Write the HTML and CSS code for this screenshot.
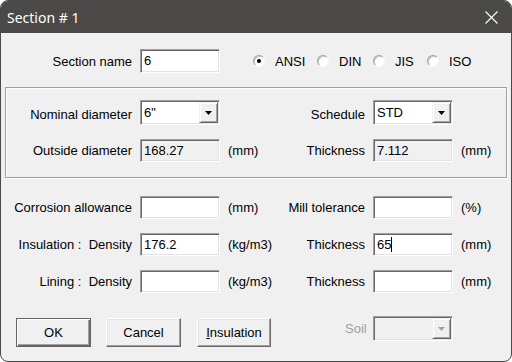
FILE: index.html
```html
<!DOCTYPE html>
<html lang="en">
<head>
    <meta charset="UTF-8">
    <title>Section # 1</title>
    <link rel="stylesheet" href="styles.css">
</head>
<body>
    <div class="window">
        <div class="titlebar">
            <span class="title">Section # 1</span>
            <svg class="close" width="13" height="13" viewBox="0 0 13 13">
                <path d="M0.5 0.5 L12.5 12.5 M12.5 0.5 L0.5 12.5" stroke="#ffffff" stroke-width="1.1" fill="none"/>
            </svg>
        </div>

        <div class="client">
            <div class="form-grid name-row">
                <span class="lbl">Section name</span>
                <div class="edit">6</div>
                <div class="radios">
                    <span class="radio r-ansi"><span class="dot checked"></span>ANSI</span>
                    <span class="radio r-din"><span class="dot"></span>DIN</span>
                    <span class="radio r-jis"><span class="dot"></span>JIS</span>
                    <span class="radio"><span class="dot"></span>ISO</span>
                </div>
            </div>

            <div class="group">
                <div class="form-grid pipe-grid">
                    <span class="lbl combo-lbl">Nominal diameter</span>
                    <div class="edit combo"><span class="combo-val">6"</span><span class="combo-btn"><svg width="7" height="4" viewBox="0 0 7 4"><polygon points="0,0 7,0 3.5,4" fill="#000"/></svg></span></div>
                    <span></span>
                    <span class="lbl combo-lbl">Schedule</span>
                    <div class="edit combo"><span class="combo-val">STD</span><span class="combo-btn"><svg width="7" height="4" viewBox="0 0 7 4"><polygon points="0,0 7,0 3.5,4" fill="#000"/></svg></span></div>
                    <span></span>

                    <span class="lbl">Outside diameter</span>
                    <div class="edit readonly">168.27</div>
                    <span class="unit">(mm)</span>
                    <span class="lbl">Thickness</span>
                    <div class="edit readonly">7.112</div>
                    <span class="unit">(mm)</span>
                </div>
            </div>

            <div class="form-grid lower-grid">
                <span class="lbl">Corrosion allowance</span>
                <div class="edit"></div>
                <span class="unit">(mm)</span>
                <span class="lbl">Mill tolerance</span>
                <div class="edit"></div>
                <span class="unit">(%)</span>

                <span class="lbl">Insulation :  Density</span>
                <div class="edit">176.2</div>
                <span class="unit">(kg/m3)</span>
                <span class="lbl">Thickness</span>
                <div class="edit">65<span class="caret"></span></div>
                <span class="unit">(mm)</span>

                <span class="lbl">Lining :  Density</span>
                <div class="edit"></div>
                <span class="unit">(kg/m3)</span>
                <span class="lbl">Thickness</span>
                <div class="edit"></div>
                <span class="unit">(mm)</span>
            </div>

            <div class="button-row">
                <button class="btn default">OK</button>
                <button class="btn">Cancel</button>
                <button class="btn btn-ins"><u>I</u>nsulation</button>
                <span class="soil-lbl">Soil</span>
                <div class="edit combo disabled"><span class="combo-val"></span><span class="combo-btn"><svg width="7" height="4" viewBox="0 0 7 4"><polygon points="0,0 7,0 3.5,4" fill="#a0a0a0"/></svg></span></div>
            </div>
        </div>
    </div>
</body>
</html>
```

FILE: styles.css
```css
body {
    margin: 0;
    background-color: #ffffff;
    font-family: "Liberation Sans", Arial, sans-serif;
    font-size: 13px;
    color: #000000;
}

.window {
    width: 512px;
    height: 362px;
    box-sizing: border-box;
    background-color: #f0f0f0;
    border: 1px solid #4b4947;
    border-radius: 8px;
    overflow: hidden;
}

.titlebar {
    height: 32px;
    background-color: #4b4947;
    display: flex;
    align-items: center;
    justify-content: space-between;
    padding: 0 13px 0 6px;
}

.title {
    color: #ffffff;
    font-family: "Noto Sans", "Open Sans", sans-serif;
    font-size: 14px;
}

.close {
    display: block;
}

.client {
    padding-top: 16px;
}

.form-grid {
    display: grid;
    grid-template-columns: 125px 80px 48px 81px 80px auto;
    column-gap: 8px;
    align-items: center;
}

.lbl {
    text-align: right;
    white-space: pre;
}

.combo-lbl {
    padding-top: 4px;
}

.unit {
    white-space: nowrap;
}

.name-row {
    margin: 0 6px;
    grid-template-rows: 24px;
}

.name-row .edit {
    height: 24px;
}

.radios {
    grid-column: 3 / -1;
    display: flex;
    align-items: center;
    padding-left: 25px;
}

.radio {
    display: flex;
    align-items: center;
}

.r-ansi {
    width: 64px;
}

.r-din {
    width: 56px;
}

.r-jis {
    width: 54px;
}

.dot {
    width: 12px;
    height: 12px;
    box-sizing: border-box;
    margin-right: 10px;
    border-radius: 50%;
    background-color: #ffffff;
    border: 1px solid;
    border-color: #a0a0a0 #f8f8f8 #f8f8f8 #a0a0a0;
    box-shadow: inset 1px 1px 0 #c8c8c8;
    display: flex;
    align-items: center;
    justify-content: center;
}

.dot.checked::after {
    content: "";
    width: 4px;
    height: 4px;
    border-radius: 50%;
    background-color: #000000;
}

.edit {
    box-sizing: border-box;
    height: 23px;
    background-color: #ffffff;
    border: 1px solid;
    border-color: #a0a0a0 #ffffff #ffffff #a0a0a0;
    box-shadow: inset 1px 1px 0 #696969, inset -1px -1px 0 #e3e3e3;
    padding: 0 3px;
    line-height: 21px;
    white-space: nowrap;
}

.edit.readonly {
    background-color: #f0f0f0;
}

.caret {
    display: inline-block;
    width: 1px;
    height: 15px;
    background-color: #000000;
    vertical-align: -3px;
}

.combo {
    height: 25px;
    display: flex;
    padding: 1px 1px 1px 3px;
    line-height: 21px;
}

.combo-val {
    flex: 1;
}

.combo-btn {
    width: 19px;
    box-sizing: border-box;
    background-color: #f0f0f0;
    border: 1px solid;
    border-color: #f0f0f0 #696969 #696969 #f0f0f0;
    box-shadow: inset 1px 1px 0 #ffffff, inset -1px -1px 0 #a0a0a0;
    display: flex;
    align-items: center;
    justify-content: center;
}

.combo.disabled {
    background-color: #f0f0f0;
}

.group {
    margin: 14px 4px 0 4px;
    padding: 12px 1px 15px 1px;
    border: 1px solid #a0a0a0;
    box-shadow: inset 1px 1px 0 #ffffff, 1px 1px 0 #ffffff;
}

.pipe-grid {
    grid-template-rows: 25px 23px;
    row-gap: 14px;
}

.lower-grid {
    margin: 18px 6px 0 6px;
    grid-template-rows: 23px 23px 23px;
    row-gap: 14px;
}

.button-row {
    display: flex;
    align-items: flex-start;
    margin-top: 25px;
    padding-left: 15px;
}

.btn {
    width: 75px;
    height: 29px;
    margin-right: 15px;
    padding: 0;
    background-color: #f0f0f0;
    border: 1px solid;
    border-color: #ffffff #696969 #696969 #ffffff;
    box-shadow: inset -1px -1px 0 #a0a0a0, inset 1px 1px 0 #e3e3e3;
    font-family: "Liberation Sans", Arial, sans-serif;
    font-size: 13px;
    color: #000000;
}

.btn.default {
    border-color: #646464;
    box-shadow: inset 1px 1px 0 #ffffff, inset -1px -1px 0 #696969, inset -2px -2px 0 #a0a0a0;
}

.btn-ins {
    width: 74px;
    margin-left: 1px;
}

.soil-lbl {
    margin-left: 59px;
    margin-right: 6px;
    margin-top: -2px;
    line-height: 25px;
    color: #a0a0a0;
}

.button-row .combo {
    width: 80px;
    margin-top: -2px;
}
```
